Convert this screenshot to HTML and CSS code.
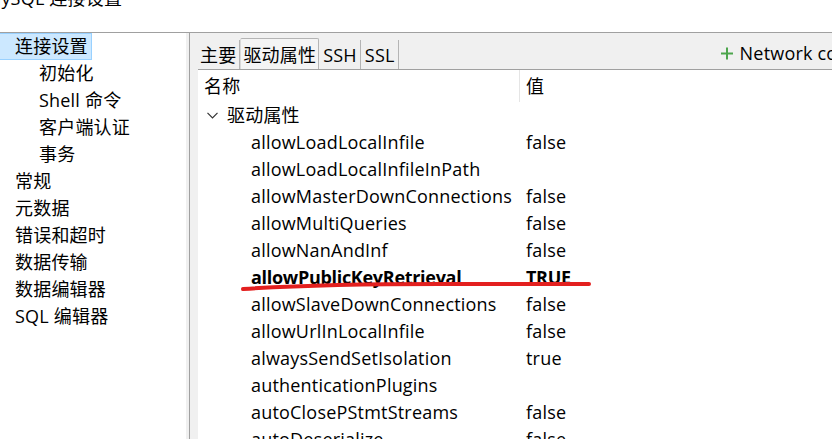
FILE: index.html
```html
<!DOCTYPE html>
<html lang="zh">
<head>
<meta charset="utf-8">
<title>MySQL 连接设置</title>
<link rel="stylesheet" href="styles.css">
</head>
<body>
<div class="window">
  <header class="titlebar"><div class="title">MySQL 连接设置</div></header>
  <div class="main">
    <nav class="tree">
      <div class="node"><span class="label selected">连接设置</span></div>
      <div class="node child"><span class="label">初始化</span></div>
      <div class="node child"><span class="label">Shell 命令</span></div>
      <div class="node child"><span class="label">客户端认证</span></div>
      <div class="node child"><span class="label">事务</span></div>
      <div class="node"><span class="label">常规</span></div>
      <div class="node"><span class="label">元数据</span></div>
      <div class="node"><span class="label">错误和超时</span></div>
      <div class="node"><span class="label">数据传输</span></div>
      <div class="node"><span class="label">数据编辑器</span></div>
      <div class="node"><span class="label">SQL 编辑器</span></div>
    </nav>
    <div class="splitter"><div class="splitter-line"></div></div>
    <section class="panel">
      <div class="tabbar">
        <div class="tab">主要</div>
        <div class="tab active">驱动属性</div>
        <div class="tab">SSH</div>
        <div class="tab">SSL</div>
        <div class="tool">
          <svg class="plus" width="12" height="13" viewBox="0 0 12 13"><path d="M6 0.5V12.5M0 6.5H12" stroke="#4ca54c" stroke-width="2" fill="none"/></svg>
          <span>Network configurations...</span>
        </div>
      </div>
      <div class="props">
        <div class="row head"><div class="c-name">名称</div><div class="c-val">值</div></div>
        <div class="row group"><div class="c-name"><svg class="chev" width="11" height="7" viewBox="0 0 11 7"><path d="M0.5 0.8L5.5 5.8L10.5 0.8" stroke="#333" stroke-width="1.2" fill="none"/></svg>驱动属性</div></div>
        <div class="row"><div class="c-name">allowLoadLocalInfile</div><div class="c-val">false</div></div>
        <div class="row"><div class="c-name">allowLoadLocalInfileInPath</div><div class="c-val"></div></div>
        <div class="row"><div class="c-name">allowMasterDownConnections</div><div class="c-val">false</div></div>
        <div class="row"><div class="c-name">allowMultiQueries</div><div class="c-val">false</div></div>
        <div class="row"><div class="c-name">allowNanAndInf</div><div class="c-val">false</div></div>
        <div class="row changed"><div class="c-name">allowPublicKeyRetrieval</div><div class="c-val">TRUE</div></div>
        <div class="row"><div class="c-name">allowSlaveDownConnections</div><div class="c-val">false</div></div>
        <div class="row"><div class="c-name">allowUrlInLocalInfile</div><div class="c-val">false</div></div>
        <div class="row"><div class="c-name">alwaysSendSetIsolation</div><div class="c-val">true</div></div>
        <div class="row"><div class="c-name">authenticationPlugins</div><div class="c-val"></div></div>
        <div class="row"><div class="c-name">autoClosePStmtStreams</div><div class="c-val">false</div></div>
        <div class="row"><div class="c-name">autoDeserialize</div><div class="c-val">false</div></div>
      </div>
    </section>
  </div>
  <svg class="scribble" width="832" height="439" viewBox="0 0 832 439">
    <path d="M243 289 Q 320 284 440 284 T 589 284" stroke="#e3201f" stroke-width="4" stroke-linecap="round" fill="none"/>
  </svg>
</div>
</body>
</html>
```

FILE: styles.css
```css
html, body {
  margin: 0;
  padding: 0;
}
body {
  width: 832px;
  height: 439px;
  overflow: hidden;
  background: #ffffff;
  color: #000;
  font-family: "Open Sans", "Noto Sans CJK SC", sans-serif;
  font-size: 18px;
  letter-spacing: 0.2px;
}
.window {
  position: relative;
  width: 832px;
  height: 439px;
  overflow: hidden;
}
.titlebar {
  overflow: hidden;
  border-bottom: 1px solid #a0a0a0;
  box-sizing: border-box;
  height: 33px;
}
.title {
  margin-top: -12px;
  margin-left: -15px;
  line-height: 20px;
  white-space: nowrap;
}
.main {
  display: flex;
  height: 406px;
}
.tree {
  width: 186px;
  flex-shrink: 0;
  background: #fff;
}
.node {
  height: 27px;
  line-height: 27px;
  padding-left: 15px;
  white-space: nowrap;
}
.node.child {
  padding-left: 39px;
}
.label.selected {
  display: inline-block;
  box-sizing: border-box;
  height: 27px;
  line-height: 25px;
  margin-left: -17px;
  padding: 0 3px 0 16px;
  background: #cce8ff;
  border: 1px solid #99d1ff;
}
.splitter {
  width: 12px;
  flex-shrink: 0;
  background: #f0f0f0;
  display: flex;
}
.splitter-line {
  width: 1px;
  margin-left: 3px;
  background: #a0a0a0;
}
.panel {
  flex: 1;
  display: flex;
  flex-direction: column;
  min-width: 0;
}
.tabbar {
  height: 37px;
  box-sizing: border-box;
  background: #f0f0f0;
  border-bottom: 1px solid #a0a0a0;
  display: flex;
  align-items: flex-end;
  white-space: nowrap;
  overflow: hidden;
}
.tab {
  height: 29px;
  box-sizing: border-box;
  line-height: 28px;
  padding: 1px 3px 0 2px;
  border-right: 1px solid #b4b4b4;
  flex-shrink: 0;
}
.tab:nth-child(3) {
  padding: 1px 3px 0 4px;
}
.tab:nth-child(4) {
  padding: 1px 3px 0 4px;
}
.tab.active {
  height: 31px;
  border: 1px solid #b4b4b4;
  border-bottom: none;
  border-left-color: #d8d8d8;
  padding: 2px 2px 0 2px;
  border-radius: 2px 2px 0 0;
  background: #f4f4f4;
}
.tool {
  align-self: stretch;
  display: flex;
  align-items: center;
  margin-left: 322px;
  flex-shrink: 0;
  padding-top: 4px;
}
.plus {
  margin-right: 7px;
}
.props {
  flex: 1;
  overflow: hidden;
  background: #fff;
}
.row {
  display: grid;
  grid-template-columns: 321px 1fr;
  height: 27px;
  line-height: 27px;
  white-space: nowrap;
}
.row .c-name {
  padding-left: 53px;
}
.row .c-val {
  padding-left: 7px;
}
.row.head {
  height: 32px;
  line-height: 32px;
}
.row.head .c-name {
  padding-left: 6px;
}
.row.head .c-val {
  padding-left: 6px;
  border-left: 1px solid #e5e5e5;
}
.row.group .c-name {
  padding-left: 9px;
  display: flex;
  align-items: center;
}
.chev {
  margin-right: 9px;
}
.row.changed {
  font-weight: 700;
  letter-spacing: -0.3px;
}
.scribble {
  position: absolute;
  left: 0;
  top: 0;
  pointer-events: none;
}
```
